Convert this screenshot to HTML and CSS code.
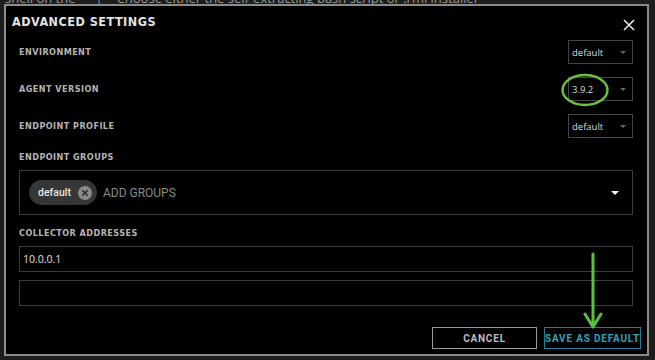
FILE: index.html
```html
<!DOCTYPE html>
<html>
<head>
<meta charset="utf-8">
<link rel="stylesheet" href="styles.css">
</head>
<body>
<div class="page">
  <p class="bg-line"><span>shell on the</span><span class="bg-sep">|</span><span>Choose either the self-extracting bash script or .rmi installer</span></p>
</div>
<div class="modal">
  <div class="modal-header">
    <h1 class="modal-title">ADVANCED SETTINGS</h1>
    <svg class="close" width="12" height="12" viewBox="0 0 12 12"><path d="M1 1L11 11M11 1L1 11" stroke="#e6e6e6" stroke-width="1.6" fill="none"/></svg>
  </div>
  <div class="modal-body">
    <div class="row">
      <span class="label">ENVIRONMENT</span>
      <div class="select"><span>default</span><i class="caret"></i></div>
    </div>
    <div class="row">
      <span class="label">AGENT VERSION</span>
      <div class="select"><span>3.9.2</span><i class="caret"></i></div>
    </div>
    <div class="row">
      <span class="label">ENDPOINT PROFILE</span>
      <div class="select"><span>default</span><i class="caret"></i></div>
    </div>
    <div class="label block-label">ENDPOINT GROUPS</div>
    <div class="groups">
      <span class="chip">default<svg class="chip-x" width="14" height="14" viewBox="0 0 14 14"><circle cx="7" cy="7" r="7" fill="#8a8a8a"/><path d="M4.3 4.3L9.7 9.7M9.7 4.3L4.3 9.7" stroke="#2a2a2a" stroke-width="1.6"/></svg></span>
      <span class="placeholder">ADD GROUPS</span>
      <i class="groups-caret"></i>
    </div>
    <div class="label block-label collector">COLLECTOR ADDRESSES</div>
    <div class="input">10.0.0.1</div>
    <div class="input second"></div>
  </div>
  <div class="modal-footer">
    <button class="btn cancel">CANCEL</button>
    <button class="btn save">SAVE AS DEFAULT</button>
  </div>
  <svg class="annot-ellipse" width="50" height="34" viewBox="0 0 50 34"><ellipse cx="25" cy="17" rx="22.5" ry="15" fill="none" stroke="#6cc23e" stroke-width="2.4"/></svg>
  <svg class="annot-arrow" width="22" height="80" viewBox="0 0 22 80"><path d="M11 2V74M3 62L11 75L19 62" fill="none" stroke="#5cc13a" stroke-width="3" stroke-linecap="round" stroke-linejoin="round"/></svg>
</div>
</body>
</html>
```

FILE: styles.css
```css
* { box-sizing: border-box; }
html, body { margin: 0; padding: 0; }
body {
  width: 655px;
  height: 360px;
  background: #1d1d1d;
  overflow: hidden;
  position: relative;
  font-family: Roboto, "Noto Sans", sans-serif;
}
.page { padding-left: 5px; }
.bg-line {
  margin: -10px 0 0 0;
  font-family: "Open Sans", sans-serif;
  font-size: 13px;
  line-height: 16px;
  color: #9a9a9a;
  white-space: nowrap;
}
.bg-sep { margin: 0 14px 0 20px; }

.modal {
  position: absolute;
  left: 4px;
  top: 4px;
  width: 645px;
  height: 352px;
  background: #000;
  border: 2px solid #8c8c8c;
  display: flex;
  flex-direction: column;
}
.modal-header {
  height: 34px;
  padding: 9px 12px 0 6px;
  display: flex;
  justify-content: space-between;
  align-items: flex-start;
}
.modal-title {
  margin: 0;
  font-family: "Liberation Sans Narrow", "DejaVu Sans Condensed", Roboto, sans-serif;
  font-size: 12.5px;
  line-height: 14px;
  font-weight: 700;
  color: #e2e2e2;
  letter-spacing: 0.5px;
}
.close { margin-top: 4px; }

.modal-body { padding: 0 14px 0 13px; }
.row {
  height: 24px;
  margin-bottom: 13px;
  display: flex;
  justify-content: space-between;
  align-items: center;
}
.label {
  font-family: "Liberation Sans Narrow", "DejaVu Sans Condensed", Roboto, sans-serif;
  font-size: 9px;
  line-height: 14px;
  font-weight: 700;
  letter-spacing: 0.45px;
  color: #b4b4b4;
}
.select {
  width: 65px;
  height: 24px;
  border: 1px solid #444;
  display: flex;
  align-items: center;
  justify-content: space-between;
  padding: 0 6px 0 3px;
  font-family: "Open Sans", sans-serif;
  font-size: 9.5px;
  color: #dedede;
}
.caret {
  width: 0; height: 0;
  border-left: 3.5px solid transparent;
  border-right: 3.5px solid transparent;
  border-top: 3.5px solid #666;
}
.block-label { margin-top: -1px; }
.groups {
  margin-top: 6px;
  height: 45px;
  border: 1px solid #3c3c3c;
  display: flex;
  align-items: center;
  padding: 0 13px 0 9px;
}
.chip {
  height: 25px;
  border-radius: 13px;
  background: #363636;
  display: inline-flex;
  align-items: center;
  padding: 0 5px 0 9px;
  font-size: 10.5px;
  font-weight: 500;
  color: #e6e6e6;
  gap: 7px;
}
.placeholder {
  margin-left: 6px;
  font-size: 12px;
  color: #8a8a8a;
  flex: 1;
}
.groups-caret {
  width: 0; height: 0;
  border-left: 4px solid transparent;
  border-right: 4px solid transparent;
  border-top: 4px solid #f2f2f2;
}
.collector { margin-top: 11px; }
.input {
  margin-top: 6px;
  height: 26px;
  border: 1px solid #3c3c3c;
  padding: 0 3px;
  display: flex;
  align-items: center;
  font-family: "Open Sans", sans-serif;
  font-size: 10.5px;
  color: #e0e0e0;
}
.input.second { margin-top: 8px; }

.modal-footer {
  margin-top: auto;
  padding: 0 6px 5px 0;
  display: flex;
  justify-content: flex-end;
  gap: 7px;
}
.btn {
  height: 22px;
  background: #000;
  font-family: Roboto, sans-serif;
  font-size: 10px;
  font-weight: 700;
  letter-spacing: 0.8px;
  padding: 0;
}
.cancel { width: 105px; border: 1px solid #9a9a9a; color: #bdbdbd; }
.save { width: 97px; border: 1px solid #1f7f98; color: #2ea3bd; }

.annot-ellipse { position: absolute; left: 554px; top: 67px; }
.annot-arrow { position: absolute; left: 576px; top: 246px; }
```
